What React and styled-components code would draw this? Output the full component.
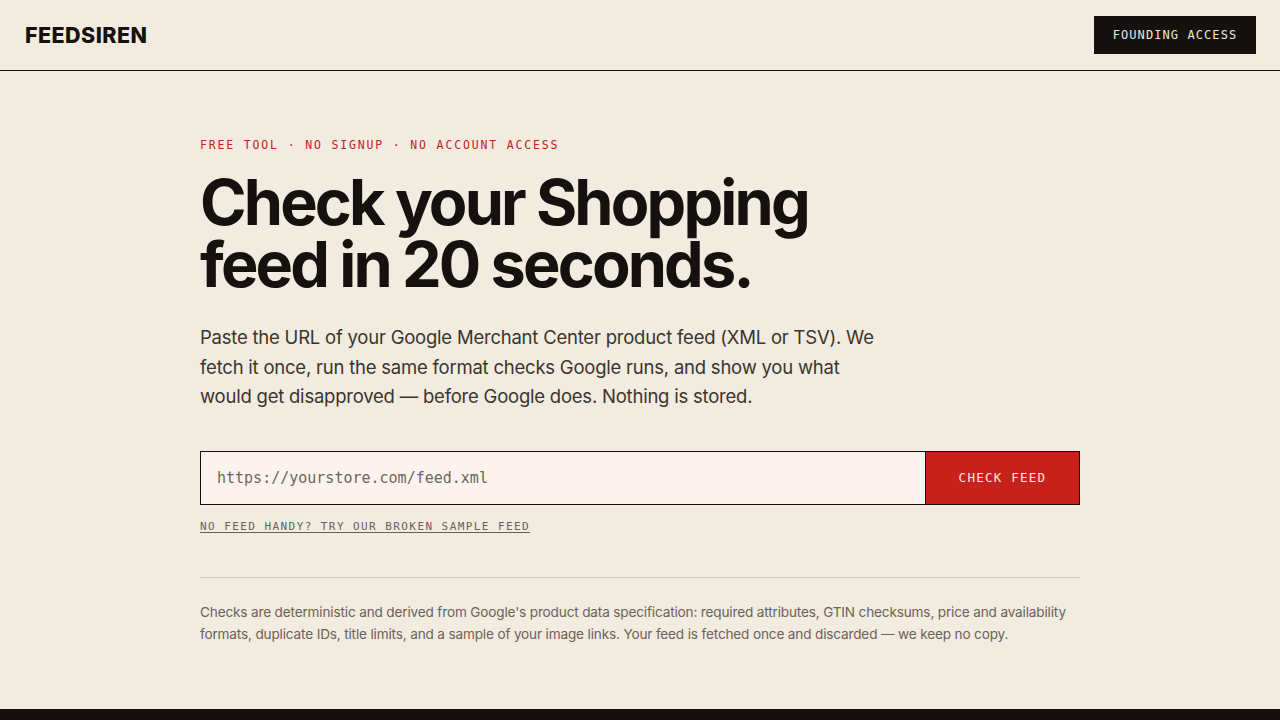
import styled, { createGlobalStyle } from "styled-components";

const GlobalStyle = createGlobalStyle`
  * { box-sizing: border-box; }
  body {
    margin: 0;
    background: #f2ebe0;
    color: #15110e;
    font-family: Inter, "Noto Sans", sans-serif;
  }
`;

const MONO = `"DejaVu Sans Mono", "Liberation Mono", monospace`;

const Page = styled.div`
  min-height: 100vh;
  display: flex;
  flex-direction: column;
`;

const Header = styled.header`
  height: 71px;
  display: flex;
  align-items: center;
  justify-content: space-between;
  padding: 0 24px 0 25px;
  border-bottom: 1px solid #15110e;
`;

const Logo = styled.div`
  font-size: 21.5px;
  font-weight: 800;
  letter-spacing: 0.02em;
  color: #15110e;
`;

const HeaderButton = styled.button`
  height: 38px;
  width: 162px;
  border: none;
  background: #15110e;
  color: #eee6d9;
  font-family: ${MONO};
  font-size: 12px;
  letter-spacing: 0.09em;
  cursor: pointer;
`;

const Main = styled.main`
  flex: 1;
  width: 880px;
  margin: 0 auto;
  padding-top: 67px;
`;

const Eyebrow = styled.div`
  font-family: ${MONO};
  font-size: 11.5px;
  letter-spacing: 0.16em;
  color: #c8201a;
`;

const Title = styled.h1`
  margin: 19px 0 0;
  font-size: 63px;
  font-weight: 700;
  line-height: 62px;
  letter-spacing: -0.045em;
  color: #15110e;
`;

const Lead = styled.p`
  margin: 28px 0 0;
  max-width: 690px;
  font-size: 18.5px;
  line-height: 29.5px;
  letter-spacing: -0.012em;
  color: #3b342d;
`;

const Form = styled.form`
  margin-top: 39px;
  display: flex;
  height: 54px;
`;

const UrlInput = styled.input`
  flex: 1;
  border: 1px solid #15110e;
  border-right: none;
  background: #fcf3ee;
  padding: 0 16px;
  font-family: ${MONO};
  font-size: 15px;
  color: #15110e;
  outline: none;
  &::placeholder { color: #6e655d; }
`;

const SubmitButton = styled.button`
  width: 155px;
  border: 1px solid #15110e;
  background: #c8201a;
  color: #f7e8e0;
  font-family: ${MONO};
  font-size: 12.5px;
  letter-spacing: 0.1em;
  cursor: pointer;
`;

const SampleLink = styled.a`
  display: inline-block;
  margin-top: 15px;
  font-family: ${MONO};
  font-size: 11px;
  letter-spacing: 0.13em;
  color: #6b6058;
  text-decoration: underline;
  text-underline-offset: 2px;
`;

const Divider = styled.hr`
  margin: 43px 0 0;
  border: none;
  border-top: 1px solid #d3cabe;
`;

const Note = styled.p`
  margin: 23px 0 0;
  font-size: 13.6px;
  line-height: 22px;
  letter-spacing: -0.012em;
  color: #6b625a;
`;

const Footer = styled.footer`
  height: 11px;
  background: #15110e;
`;

export default function App() {
  return (
    <Page>
      <GlobalStyle />
      <Header>
        <Logo>FEEDSIREN</Logo>
        <HeaderButton>FOUNDING ACCESS</HeaderButton>
      </Header>
      <Main>
        <Eyebrow>FREE TOOL · NO SIGNUP · NO ACCOUNT ACCESS</Eyebrow>
        <Title>
          Check your Shopping
          <br />
          feed in 20 seconds.
        </Title>
        <Lead>
          Paste the URL of your Google Merchant Center product feed (XML or TSV). We
          fetch it once, run the same format checks Google runs, and show you what
          would get disapproved — before Google does. Nothing is stored.
        </Lead>
        <Form onSubmit={(e) => e.preventDefault()}>
          <UrlInput placeholder="https://yourstore.com/feed.xml" />
          <SubmitButton type="submit">CHECK FEED</SubmitButton>
        </Form>
        <SampleLink href="#">NO FEED HANDY? TRY OUR BROKEN SAMPLE FEED</SampleLink>
        <Divider />
        <Note>
          Checks are deterministic and derived from Google's product data specification:
          required attributes, GTIN checksums, price and availability formats, duplicate
          IDs, title limits, and a sample of your image links. Your feed is fetched once
          and discarded — we keep no copy.
        </Note>
      </Main>
      <Footer />
    </Page>
  );
}
